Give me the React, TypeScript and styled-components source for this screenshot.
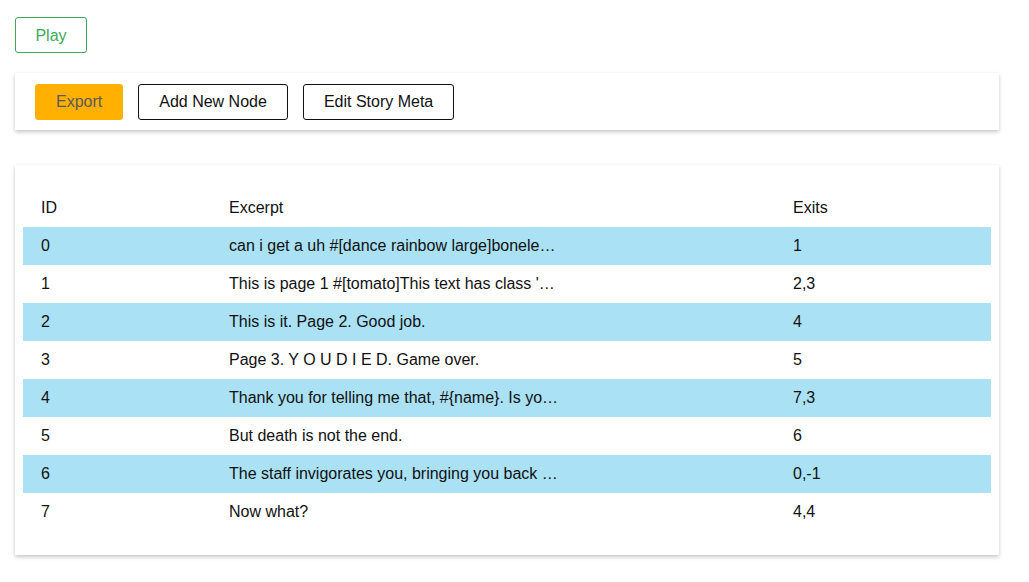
import React from 'react';
import styled, { createGlobalStyle } from 'styled-components';

const GlobalStyle = createGlobalStyle`
  html, body {
    margin: 0;
    padding: 0;
    background: #fff;
    font-family: "Liberation Sans", Arial, Helvetica, sans-serif;
    font-size: 16px;
    color: #111;
  }
`;

const Page = styled.div`
  padding: 17px 30px 20px 15px;
  display: flex;
  flex-direction: column;
  align-items: stretch;
`;

const PlayButton = styled.button`
  align-self: flex-start;
  width: 72px;
  height: 36px;
  padding: 1px 0 0;
  border: 1px solid #3da85a;
  border-radius: 3px;
  background: #fff;
  color: #3da85a;
  font-family: inherit;
  font-size: 16px;
  cursor: pointer;
  margin-bottom: 20px;
`;

const Card = styled.div<{ $pad: string }>`
  background: #fff;
  padding: ${({ $pad }) => $pad};
  box-shadow: 0 2px 4px rgba(0, 0, 0, 0.22), 0 0 1px rgba(0, 0, 0, 0.06);
`;

const Toolbar = styled(Card)`
  display: flex;
  gap: 15px;
  margin-bottom: 35px;
`;

const ToolButton = styled.button<{ $primary?: boolean }>`
  height: 36px;
  padding: 0 20px;
  border-radius: 3px;
  font-family: inherit;
  font-size: 16px;
  cursor: pointer;
  border: 1px solid ${({ $primary }) => ($primary ? '#ffb000' : '#111')};
  background: ${({ $primary }) => ($primary ? '#ffb000' : '#fff')};
  color: ${({ $primary }) => ($primary ? '#5a5a5a' : '#111')};
`;

const Table = styled.table`
  width: 100%;
  border-collapse: collapse;
  table-layout: fixed;
`;

const Row = styled.tr<{ $striped?: boolean }>`
  height: 38px;
  background: ${({ $striped }) => ($striped ? '#aae1f5' : 'transparent')};
`;

const HeadCell = styled.th<{ $w?: number }>`
  box-sizing: border-box;
  text-align: left;
  font-weight: 400;
  padding: 0 18px;
  width: ${({ $w }) => ($w ? `${$w}px` : 'auto')};
`;

const Cell = styled.td`
  padding: 0 18px;
  white-space: nowrap;
  overflow: hidden;
`;

const nodes = [
  { id: 0, excerpt: 'can i get a uh #[dance rainbow large]bonele…', exits: '1' },
  { id: 1, excerpt: "This is page 1 #[tomato]This text has class '…", exits: '2,3' },
  { id: 2, excerpt: 'This is it. Page 2. Good job.', exits: '4' },
  { id: 3, excerpt: 'Page 3. Y O U D I E D. Game over.', exits: '5' },
  { id: 4, excerpt: 'Thank you for telling me that, #{name}. Is yo…', exits: '7,3' },
  { id: 5, excerpt: 'But death is not the end.', exits: '6' },
  { id: 6, excerpt: 'The staff invigorates you, bringing you back …', exits: '0,-1' },
  { id: 7, excerpt: 'Now what?', exits: '4,4' },
];

const App: React.FC = () => {
  return (
    <>
      <GlobalStyle />
      <Page>
        <PlayButton>Play</PlayButton>
        <Toolbar $pad="11px 20px 10px">
          <ToolButton $primary>Export</ToolButton>
          <ToolButton>Add New Node</ToolButton>
          <ToolButton>Edit Story Meta</ToolButton>
        </Toolbar>
        <Card $pad="24px 8px">
          <Table>
            <thead>
              <Row>
                <HeadCell $w={188}>ID</HeadCell>
                <HeadCell $w={564}>Excerpt</HeadCell>
                <HeadCell>Exits</HeadCell>
              </Row>
            </thead>
            <tbody>
              {nodes.map((n, i) => (
                <Row key={n.id} $striped={i % 2 === 0}>
                  <Cell>{n.id}</Cell>
                  <Cell>{n.excerpt}</Cell>
                  <Cell>{n.exits}</Cell>
                </Row>
              ))}
            </tbody>
          </Table>
        </Card>
      </Page>
    </>
  );
};

export default App;
